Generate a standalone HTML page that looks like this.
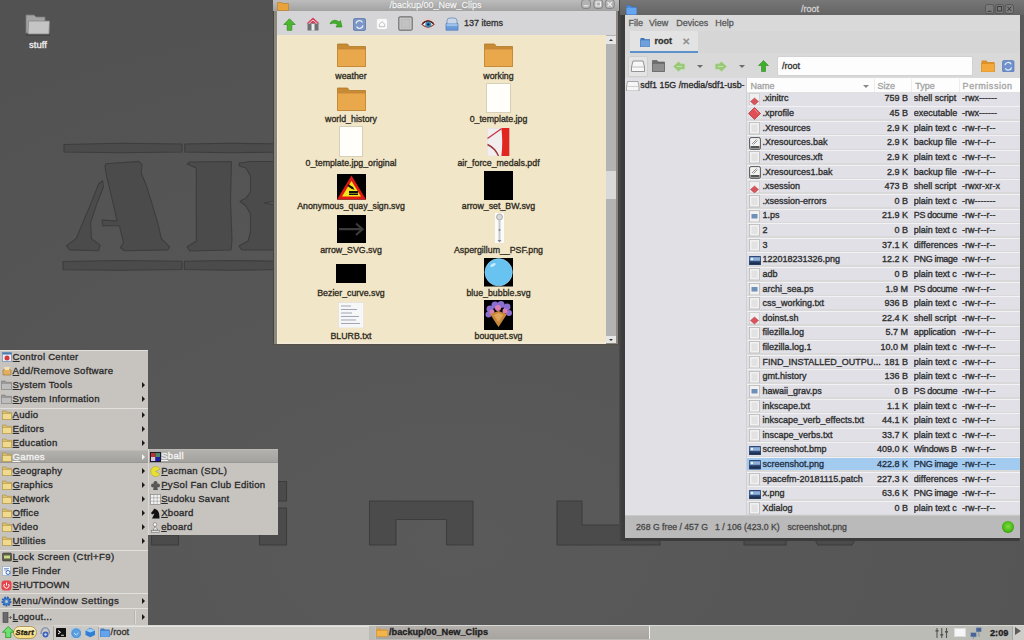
<!DOCTYPE html>
<html><head><meta charset="utf-8">
<style>
*{box-sizing:border-box;margin:0;padding:0}
html,body{width:1024px;height:640px;overflow:hidden}
body{position:relative;background:#545454;font-family:"Liberation Sans",sans-serif;color:#222;-webkit-text-stroke-width:0.32px}
.a{position:absolute}
.t{position:absolute;white-space:nowrap;line-height:1}
</style></head><body>

<!-- wallpaper shapes -->
<svg class="a" style="left:0;top:0" width="1024" height="640">
 <defs>
  <radialGradient id="wg" cx="0.45" cy="0.85" r="0.9">
   <stop offset="0" stop-color="#5a5a5a"/><stop offset="1" stop-color="#525252"/>
  </radialGradient>
 </defs>
 <rect width="1024" height="640" fill="url(#wg)"/>
 <g fill="#4b4b4b" stroke="#3d3d3d" stroke-width="1.1" stroke-linejoin="round">
  <path d="M64 144.5L120 143.2L182 144V152L120 152.8L64 152z"/>
  <path d="M184.8 144L230 143.2L285 144V152L230 152.8L184.8 152z"/>
  <path d="M63 261.5L120 260.5L182 261.3V269.5L120 270.3L63 269.7z"/>
  <path d="M184.3 261.3L230 260.5L285 261.3V269.5L230 270.3L184.3 269.5z"/>
  <polygon points="102.6,180.7 103.4,187.2 97,203.3 90.6,222.6 91.4,238.6 100.2,245.1 98.6,250.7 69.7,249.9 66.4,245.9 76.1,238.6 89,208.1 98.6,184"/>
  
  <polygon points="105.8,163.8 138.8,161.4 142,164.7 141.2,172.7 146.9,187.2 153.3,208.1 158.1,224.2 161.3,238.6 169.4,246.7 167.8,249.9 124.3,250.7 120.3,247.5 123.5,242.7 119.5,225.8 102.6,225.8 102.1,220.1 117.1,220.9 113.1,203.3 106.6,175.9 105,166.3"/>
  <polygon points="187,164 190,162 231.5,161.5 230.5,200 232,240 231,250 190,251 187,247 196.3,241 196.3,168"/>
  <polygon points="239.3,163 250,161.5 285,161.5 285,199 264,203 285,207 285,250 242,250 239,246 248,241 250.5,232 250.5,214 246,206 240,201.5 246,198 250.5,192 250.5,176 246,168 239.3,166"/>
  <polygon points="369.5,501 473,501 473,545 446.5,545 446.5,519.5 396,519.5 396,545 369.5,545"/>
  <polygon points="557,501 582,501 582,525 660,525 660,545 557,545"/>
  <rect x="151.5" y="535" width="27" height="10"/>
  <rect x="259.5" y="481.5" width="27" height="19.5"/>
  <rect x="259.5" y="508" width="27" height="37"/>
  <rect x="744" y="538" width="42" height="7"/>
  <polygon points="814,538 856,538 852,545 818,545"/>
 </g>
</svg>

<!-- desktop icon -->
<div class="a" style="left:25px;top:14px;width:25px;height:23px">
 <svg width="25" height="23" viewBox="0 0 25 23">
  <rect x="1" y="19.5" width="24" height="2.5" fill="#3e3e3e" opacity="0.7"/>
  <path d="M1 1h8l2 2h9v16H1z" fill="#a4a4a4" stroke="#7a7a7a" stroke-width="0.8"/>
  <path d="M3.5 7H24.5L24 20H3z" fill="#c4c4c4" stroke="#858585" stroke-width="0.8"/>
 </svg>
</div>
<div class="t" style="left:29px;top:40px;font-size:9.5px;color:#f0f0f0">stuff</div>

<!-- LEFT WINDOW -->
<div class="a" style="left:273px;top:0;width:346px;height:346px;background:linear-gradient(#454540 340px,#4d4944 343px,#5a5650 346px)"></div><div class="a" style="left:274.3px;top:0;width:344.2px;height:343.5px;background:#8c8880"></div>
<div class="a" style="left:273px;top:0;width:345.5px;height:11px;background:linear-gradient(#bdbdbd,#a2a2a2)"></div>
<svg class="a" style="left:277px;top:1px" width="12" height="10" viewBox="0 0 12 10"><path d="M0.5 1.5h4l1 1h6v7h-11z" fill="#e8a33c" stroke="#b97a20" stroke-width="0.6"/></svg>
<div class="t" style="left:389.5px;top:0.5px;font-size:9px;color:#f6f6f6;text-shadow:0 0 1px #555">/backup/00_New_Clips</div>
<svg class="a" style="left:580.5px;top:-1px" width="34" height="10" viewBox="0 0 34 10">
<g fill="#b2b2b2" stroke="#7a7a7a" stroke-width="0.8"><rect x="0.5" y="0.5" width="9" height="9" rx="3"/><rect x="12.8" y="0.5" width="9" height="9" rx="3"/><rect x="24.3" y="0.5" width="9" height="9" rx="3"/></g>
<g stroke="#eee" stroke-width="1.1" fill="none"><path d="M2.5 6.8H7.5"/><rect x="15" y="3" width="4.6" height="4"/><path d="M26.5 3L31 7.5M31 3L26.5 7.5"/></g></svg>
<!-- toolbar -->
<div class="a" style="left:277px;top:11px;width:339px;height:24px;background:#d5d5d8"></div>
<div class="a" style="left:277px;top:35px;width:329px;height:308.5px;background:#f1e6c7;border-left:1.5px solid #f6eedb;border-bottom:2.5px solid #f2ead6"></div>
<!-- scrollbar -->
<div class="a" style="left:606px;top:35px;width:9.5px;height:308px;background:#b3b3b3"></div>
<div class="a" style="left:606px;top:36px;width:9.5px;height:8px;background:#e6e6e6"></div>
<div class="a" style="left:608.5px;top:39px;width:0;height:0;border-left:2.5px solid transparent;border-right:2.5px solid transparent;border-bottom:2.5px solid #333"></div>
<div class="a" style="left:606px;top:170.5px;width:9.5px;height:28px;background:#d9d9d9"></div>
<div class="a" style="left:606px;top:336px;width:9.5px;height:7px;background:#e6e6e6"></div>
<div class="a" style="left:608.5px;top:338.5px;width:0;height:0;border-left:2.5px solid transparent;border-right:2.5px solid transparent;border-top:2.5px solid #333"></div>
<!-- left toolbar icons -->
<svg class="a" style="left:283px;top:17.5px" width="13" height="13" viewBox="0 0 13 13"><path d="M6.5 0.8L12.2 6.5H8.8V12.3H4.2V6.5H0.8z" fill="#4cb830" stroke="#2f8a1c" stroke-width="0.7"/></svg>
<svg class="a" style="left:306px;top:16.5px" width="14" height="14" viewBox="0 0 14 14"><path d="M7 0.5L13.5 6.5H0.5z" fill="#d2405a"/><rect x="1.5" y="6.5" width="11" height="7" fill="#6f7070"/><rect x="5.5" y="7" width="3" height="6.5" fill="#e8eef0"/><path d="M3 6.5L7 3L11 6.5" fill="none" stroke="#f2f2f2" stroke-width="0.8"/></svg>
<svg class="a" style="left:328.5px;top:17.5px" width="14" height="12" viewBox="0 0 14 12"><path d="M1 6C2 2 7 1 10 4L11.5 2.5L13 9H7L8.5 6.5C6 4.5 3.5 5 1 6z" fill="#43b02a" stroke="#2e8a1c" stroke-width="0.6"/></svg>
<svg class="a" style="left:352.5px;top:17.5px" width="13" height="13" viewBox="0 0 13 13"><rect x="0.5" y="0.5" width="12" height="12" rx="1.5" fill="#7b95c6" stroke="#55709f" stroke-width="0.7"/><path d="M3 5.5A3.5 3.5 0 0 1 9.5 4.5M10 7.5A3.5 3.5 0 0 1 3.5 8.5" fill="none" stroke="#e6edf7" stroke-width="1.3"/></svg>
<svg class="a" style="left:376px;top:17.5px" width="12.5" height="12.5" viewBox="0 0 12.5 12.5"><rect x="0.8" y="1" width="11" height="11" rx="2.2" fill="#c8c8c8"/><rect x="0.5" y="0.5" width="11" height="11" rx="2.2" fill="#fafafa" stroke="#d0d0d0" stroke-width="0.6"/><path d="M3.3 6.3L6 3.6L8.7 6.3V8.7H3.3z" fill="none" stroke="#b8b8b8" stroke-width="0.9"/></svg>
<svg class="a" style="left:397.5px;top:16px" width="15" height="15" viewBox="0 0 15 15"><rect x="0.8" y="0.8" width="13.4" height="13.4" rx="1.5" fill="#cfcfcf" stroke="#6f6f6f" stroke-width="1.2"/><rect x="3" y="3" width="9" height="9" fill="#c2c2c2" stroke="#a8a8a8" stroke-width="0.5"/></svg>
<svg class="a" style="left:421px;top:16.5px" width="14" height="14" viewBox="0 0 14 14"><ellipse cx="7" cy="7" rx="6.3" ry="5.8" fill="#e8c8c0" opacity="0.8"/><path d="M1 7.3Q7 0.5 13 7.3Q7 12.8 1 7.3z" fill="#f8f6f6" stroke="#8a3a38" stroke-width="1.1"/><path d="M1.5 6.5Q7 1.5 12.5 6.5" fill="none" stroke="#5a1a1a" stroke-width="1.4"/><circle cx="7.3" cy="7.4" r="3" fill="#3a8ab8"/><circle cx="7.3" cy="7.4" r="1.2" fill="#0a2a3a"/></svg>
<svg class="a" style="left:445px;top:16.5px" width="14" height="14" viewBox="0 0 14 14"><path d="M1 6.5H13V13.2H1z" fill="#6a9ad8" stroke="#4a78b8" stroke-width="0.7"/><path d="M2 6.5V3.5Q2 1 5 1H9Q12 1 12 3.5V6.5" fill="#c8d8ea" stroke="#6a8ab8" stroke-width="0.8"/><rect x="1.5" y="7" width="11" height="2.2" fill="#9cc0ea"/></svg>
<div class="t" style="left:464px;top:18.5px;font-size:9px;color:#333">137 items</div>
<!-- left window items -->
<style>
.lb{position:absolute;width:160px;text-align:center;font-size:8.8px;margin-top:1px;color:#2e2a22;white-space:nowrap;line-height:1}
</style>
<svg class="a" style="left:336.5px;top:43px" width="29" height="24" viewBox="0 0 29 24"><path d="M0.5 1h10l2 2.5h16v20h-28z" fill="#c98a34" stroke="#b07a2c" stroke-width="0.8"/><path d="M0.5 6h28v17.5h-28z" fill="#e9a84c" stroke="#c28637" stroke-width="0.8"/></svg>
<div class="lb" style="left:271px;top:71px">weather</div>
<svg class="a" style="left:483.5px;top:43px" width="29" height="24" viewBox="0 0 29 24"><path d="M0.5 1h10l2 2.5h16v20h-28z" fill="#c98a34" stroke="#b07a2c" stroke-width="0.8"/><path d="M0.5 6h28v17.5h-28z" fill="#e9a84c" stroke="#c28637" stroke-width="0.8"/></svg>
<div class="lb" style="left:418.5px;top:71px">working</div>

<svg class="a" style="left:336.5px;top:86.5px" width="29" height="24" viewBox="0 0 29 24"><path d="M0.5 1h10l2 2.5h16v20h-28z" fill="#c98a34" stroke="#b07a2c" stroke-width="0.8"/><path d="M0.5 6h28v17.5h-28z" fill="#e9a84c" stroke="#c28637" stroke-width="0.8"/></svg>
<div class="lb" style="left:271px;top:114.3px">world_history</div>
<div class="a" style="left:486px;top:82.5px;width:25px;height:30.5px;background:#fffefa;border:1px solid #d8cfb8"></div>
<div class="lb" style="left:418.5px;top:114.3px">0_template.jpg</div>

<div class="a" style="left:339px;top:126px;width:24px;height:30.5px;background:#fffefa;border:1px solid #d8cfb8"></div>
<div class="lb" style="left:271px;top:157.9px">0_template.jpg_original</div>
<svg class="a" style="left:487.3px;top:128.2px" width="22.3" height="28.2" viewBox="0 0 22.3 28.2"><rect x="0" y="0" width="22.3" height="28.2" fill="#f2eef0" stroke="#d8d0cc" stroke-width="0.6"/><path d="M14.4 0H22.3V28.2H14.4C15.5 18 15.5 9 14.4 0z" fill="#e0261e"/><path d="M0.5 10.5Q7 6 14.4 0.8" fill="none" stroke="#c43a44" stroke-width="1.4"/><path d="M0.5 16.5Q8 20 11.5 28" fill="none" stroke="#9c3438" stroke-width="1.4"/></svg>
<div class="lb" style="left:418.5px;top:157.9px">air_force_medals.pdf</div>

<svg class="a" style="left:336.5px;top:174.3px" width="29" height="25.6" viewBox="0 0 29 25.6"><rect width="29" height="25.6" fill="#000"/><path d="M14.5 1.5L29 25.6H0z" fill="#e01a12"/><path d="M14.5 7L24 22.5H5z" fill="#f5e51c"/><path d="M11 10L16 13L17.5 16L14 14.5L10.5 12z" fill="#111"/><rect x="12" y="17" width="9" height="2.5" fill="#111"/><rect x="12" y="20" width="9" height="1" fill="#111"/></svg>
<div class="lb" style="left:271px;top:201.4px">Anonymous_quay_sign.svg</div>
<div class="a" style="left:484px;top:171.2px;width:29px;height:29px;background:#000"></div>
<div class="lb" style="left:418.5px;top:201.4px">arrow_set_BW.svg</div>

<svg class="a" style="left:336.5px;top:214.7px" width="29" height="28.5" viewBox="0 0 29 28.5"><rect width="29" height="28.5" fill="#000"/><path d="M2 14.2H25M19 8.5L25.5 14.2L19 20" fill="none" stroke="#3b3b3b" stroke-width="2.2"/></svg>
<div class="lb" style="left:271px;top:244.6px">arrow_SVG.svg</div>
<svg class="a" style="left:494.5px;top:212.8px" width="9" height="30.5" viewBox="0 0 9 30.5"><rect width="9" height="30.5" fill="#fbfbfb"/><circle cx="4.5" cy="4" r="3" fill="#d8d8d8" stroke="#999" stroke-width="0.7"/><rect x="3.5" y="7" width="2" height="21" fill="#c9c9c9"/><circle cx="4.5" cy="17" r="1" fill="#888"/><path d="M2.5 27L4.5 29.5L6.5 27z" fill="#888"/></svg>
<div class="lb" style="left:418.5px;top:244.6px">Aspergillum__PSF.png</div>

<div class="a" style="left:336.3px;top:264px;width:29.7px;height:19px;background:#000"></div>
<div class="lb" style="left:271px;top:287.9px">Bezier_curve.svg</div>
<svg class="a" style="left:484.2px;top:258.2px" width="29.3" height="28.5" viewBox="0 0 29.3 28.5"><rect width="29.3" height="28.5" fill="#000"/><circle cx="14.65" cy="14.25" r="13.6" fill="#69c3f0"/><circle cx="14.65" cy="14.25" r="13.6" fill="none" stroke="#8fd3f5" stroke-width="0.8"/><ellipse cx="9" cy="7" rx="3" ry="1.5" fill="#c8ecfc" transform="rotate(-30 9 7)"/></svg>
<div class="lb" style="left:418.5px;top:287.9px">blue_bubble.svg</div>

<svg class="a" style="left:337.7px;top:301.8px" width="26.3" height="26.5" viewBox="0 0 26.3 26.5"><rect x="0.5" y="0.5" width="25.3" height="25.5" fill="#f7f7f7" stroke="#dcdcdc" stroke-width="0.6"/><g stroke="#8592a8" stroke-width="0.8"><path d="M3 4H13M3 7.5H19M3 11H14M3 14.5H21M3 18H18M3 21.5H22"/></g></svg>
<div class="lb" style="left:271px;top:331.4px">BLURB.txt</div>
<svg class="a" style="left:484.2px;top:299.8px" width="29.3" height="30.2" viewBox="0 0 29.3 30.2"><rect width="29.3" height="30.2" fill="#000"/><g fill="#8a6fd0"><circle cx="6" cy="9" r="3.5"/><circle cx="11" cy="5" r="3.5"/><circle cx="17" cy="4.5" r="3.5"/><circle cx="23" cy="7" r="3.5"/><circle cx="25" cy="13" r="3"/><circle cx="4.5" cy="14.5" r="3"/></g><g fill="#d77fb0"><circle cx="14" cy="8" r="3"/><circle cx="21" cy="11" r="2.5"/><circle cx="8" cy="12" r="2.5"/></g><path d="M6 14L14.5 11L23 14L14.5 27z" fill="#c8883c"/><path d="M10 15L14.5 13L19 15L14.5 22z" fill="#e0a55a"/></svg>
<div class="lb" style="left:418.5px;top:331.4px">bouquet.svg</div>
<!-- RIGHT WINDOW -->
<style>
.rw{font-size:9px;color:#2b2b2b}
.row{position:absolute;left:747px;width:273.3px;height:13.1px;background:#e0e0e6;border-top:1.5px solid #f2f2f5}
.nm{position:absolute;left:762.5px;font-size:9px;color:#2d2d2d;white-space:nowrap;line-height:1}
.sz{position:absolute;right:116px;font-size:9px;color:#2d2d2d;white-space:nowrap;line-height:1}
.ty{position:absolute;left:913.8px;width:50px;overflow:hidden;font-size:9px;color:#2d2d2d;white-space:nowrap;line-height:1}
.pm{position:absolute;left:962px;font-size:9px;color:#2d2d2d;white-space:nowrap;line-height:1}
</style>
<div class="a" style="left:618.5px;top:0;width:405.5px;height:541px;background:linear-gradient(90deg,#4a4a4a,#3c3c3c 3px,#3c3c3c 400px,#585858 401.5px,#5a5a5a)"></div>
<div class="a" style="left:619.5px;top:0;width:404.5px;height:15px;background:linear-gradient(#777,#636363)"></div>
<svg class="a" style="left:625.5px;top:4.5px" width="11" height="10" viewBox="0 0 11 10"><path d="M0.5 0.5h4l1 1.5h5v7.5h-10z" fill="#4d8fe0" stroke="#3a6fb5" stroke-width="0.5"/><rect x="0.5" y="3" width="10" height="6.5" fill="#64a6f2"/></svg>
<div class="t" style="left:801px;top:5px;font-size:9px;color:#cfcfcf">/root</div>
<svg class="a" style="left:985px;top:4.3px" width="29" height="10" viewBox="0 0 29 10">
<g fill="#7a7a7a" stroke="#505050" stroke-width="0.8"><rect x="0.5" y="0.5" width="8.3" height="9" rx="2"/><rect x="10.3" y="0.5" width="8.3" height="9" rx="2"/><rect x="20.2" y="0.5" width="8.3" height="9" rx="2"/></g>
<g stroke="#3a3a3a" stroke-width="1" fill="none"><path d="M2.5 7.3H6.5"/><rect x="12.3" y="2.5" width="4.3" height="4.5"/><path d="M22.3 2.6L26.3 7M26.3 2.6L22.3 7"/></g></svg>
<div class="a" style="left:625px;top:15px;width:395.3px;height:523px;background:#d9d9d9"></div>
<div class="t" style="left:628.5px;top:18.5px;font-size:9px;color:#5c5c5c">File</div>
<div class="t" style="left:649px;top:18.5px;font-size:9px;color:#5c5c5c">View</div>
<div class="t" style="left:676.2px;top:18.5px;font-size:9px;color:#5c5c5c">Devices</div>
<div class="t" style="left:715.3px;top:18.5px;font-size:9px;color:#5c5c5c">Help</div>
<!-- tab bar -->
<div class="a" style="left:625px;top:30.5px;width:395.3px;height:22.5px;background:#d6d6d6"></div>
<div class="a" style="left:630px;top:31.2px;width:67.5px;height:20px;background:#e3e3e3"></div>
<div class="a" style="left:630px;top:50.8px;width:67.5px;height:2.3px;background:#5b92c9"></div>
<svg class="a" style="left:639.5px;top:36.5px" width="10.5" height="10.5" viewBox="0 0 10.5 10.5"><path d="M0.5 1h3.5l1 1.2h5v7.8h-9.5z" fill="#3f76b8"/><rect x="0.5" y="3" width="9.5" height="7" fill="#6fa2dc" stroke="#4678b5" stroke-width="0.6"/></svg>
<div class="t" style="left:654.4px;top:37px;font-size:9px;font-weight:bold;color:#333">root</div>
<div class="t" style="left:681.5px;top:36.5px;font-size:10px;color:#8a8a8a">✕</div>
<!-- toolbar -->
<div class="a" style="left:628px;top:55.5px;width:19.5px;height:21px;background:#e4e4e4;border:1px solid #cfcfcf;border-radius:2px"></div>
<svg class="a" style="left:631px;top:60px" width="14" height="12" viewBox="0 0 14 12"><path d="M2 1h10l1.5 6v4.5h-13V7z" fill="#f7f7f7" stroke="#7d7d7d" stroke-width="0.8"/><path d="M0.5 7h13" stroke="#9a9a9a" stroke-width="0.6"/></svg>
<svg class="a" style="left:652px;top:60px" width="13" height="12" viewBox="0 0 13 12"><path d="M0.5 0.5h4.5l1 1.5h6.5v9.5h-12z" fill="#6e6e6e" stroke="#555" stroke-width="0.6"/><rect x="0.5" y="3.5" width="12" height="8" fill="#8e8e8e" stroke="#666" stroke-width="0.6"/></svg>
<svg class="a" style="left:673px;top:61px" width="12" height="11" viewBox="0 0 12 11"><path d="M0.5 5.5L5.5 0.8L8 3H11.5V8H8L5.5 10.2z" fill="#98c878" stroke="#a8d48a" stroke-width="0.8" stroke-linejoin="round"/><path d="M4 5.5H9" stroke="#c4e4ae" stroke-width="1"/></svg>
<div class="a" style="left:697.3px;top:65px;width:0;height:0;border-left:3px solid transparent;border-right:3px solid transparent;border-top:3px solid #6c6c6c"></div>
<svg class="a" style="left:715.3px;top:61px" width="12" height="11" viewBox="0 0 12 11"><path d="M11.5 5.5L6.5 0.8L4 3H0.5V8H4L6.5 10.2z" fill="#98c878" stroke="#a8d48a" stroke-width="0.8" stroke-linejoin="round"/><path d="M3 5.5H8" stroke="#c4e4ae" stroke-width="1"/></svg>
<div class="a" style="left:738.7px;top:65px;width:0;height:0;border-left:3px solid transparent;border-right:3px solid transparent;border-top:3px solid #6c6c6c"></div>
<svg class="a" style="left:757.5px;top:60px" width="11" height="12" viewBox="0 0 11 12"><path d="M5.5 0.5L10.5 5.5H7.5V11.5H3.5V5.5H0.5z" fill="#3fae2a" stroke="#2c8a1b" stroke-width="0.6"/></svg>
<div class="a" style="left:777px;top:56px;width:196px;height:19.5px;background:#fdfdfd;border:1px solid #d2d2d2;border-radius:2px"></div>
<div class="t" style="left:782px;top:61.5px;font-size:9px;color:#333">/root</div>
<svg class="a" style="left:981px;top:59.5px" width="14" height="12.5" viewBox="0 0 14 12.5"><path d="M0.5 0.5h5l1.2 1.5h6.8v10h-13z" fill="#d98f2a"/><rect x="0.5" y="3.5" width="13" height="8.5" fill="#f4a93c" stroke="#d58a25" stroke-width="0.6"/></svg>
<svg class="a" style="left:1002px;top:59.5px" width="12.5" height="12.5" viewBox="0 0 12.5 12.5"><rect x="0.5" y="0.5" width="11.5" height="11.5" rx="1.5" fill="#6f92cc" stroke="#4d6fa8" stroke-width="0.6"/><path d="M3 5.2A3.3 3.3 0 0 1 9.2 4.3M9.5 7.3A3.3 3.3 0 0 1 3.3 8.2" fill="none" stroke="#e8eef8" stroke-width="1.2"/></svg>
<!-- sidebar -->
<div class="a" style="left:625px;top:78px;width:120.5px;height:437px;background:#e1e0e5"></div>
<svg class="a" style="left:626.2px;top:80.5px" width="13.5" height="10.5" viewBox="0 0 13.5 10.5"><path d="M1.5 0.5h10.5l1 5v4.5h-12.5V5.5z" fill="#f6f6f6" stroke="#8a8a8a" stroke-width="0.7"/><path d="M0.5 5.5h12.5" stroke="#aaa" stroke-width="0.5"/></svg>
<div class="t" style="left:640.3px;top:81px;font-size:8.85px;color:#2a2a2a">sdf1 15G /media/sdf1-usb-</div>
<div class="a" style="left:745.5px;top:78px;width:1.5px;height:437px;background:#d0d0d5"></div>
<!-- list header -->
<div class="a" style="left:747px;top:78px;width:273.3px;height:15.2px;background:#fdfdfd;border-bottom:1px solid #e0e0e0"></div>
<div class="t" style="left:750.5px;top:81.5px;font-size:9px;color:#a4a4a4">Name</div>
<div class="a" style="left:862.5px;top:85px;width:0;height:0;border-left:3px solid transparent;border-right:3px solid transparent;border-top:3px solid #888"></div>
<div class="a" style="left:873.5px;top:79px;width:1px;height:13px;background:#ececec"></div>
<div class="t" style="left:877.6px;top:81.5px;font-size:9px;color:#a4a4a4">Size</div>
<div class="a" style="left:911px;top:79px;width:1px;height:13px;background:#ececec"></div>
<div class="t" style="left:915.3px;top:81.5px;font-size:9px;color:#a4a4a4">Type</div>
<div class="a" style="left:958.5px;top:79px;width:1px;height:13px;background:#ececec"></div>
<div class="t" style="left:962.6px;top:81.5px;font-size:9px;color:#a4a4a4;letter-spacing:0.55px">Permission</div>
<!-- status bar -->
<div class="a" style="left:625px;top:515.3px;width:395.3px;height:22.7px;background:#bababa;border-top:1px solid #c8c8c8"></div>
<div class="t" style="left:636px;top:522.5px;font-size:8.7px;color:#4a4a4a">268 G free / 457 G</div>
<div class="t" style="left:715px;top:522.5px;font-size:8.7px;color:#4a4a4a">1 / 106 (423.0 K)</div>
<div class="t" style="left:787.5px;top:522.5px;font-size:8.7px;color:#4a4a4a">screenshot.png</div>
<div class="a" style="left:1002.2px;top:521px;width:11.7px;height:11.5px;border-radius:50%;background:radial-gradient(circle at 50% 45%,#7ee040,#4cb818 55%,#2f8a12 85%,#6cbc50)"></div>
<!-- rows -->
<div class="a" style="left:747px;top:93.2px;width:273.3px;height:421.8px;overflow:hidden"><div class="a" style="left:-747px;top:-93.2px;width:1024px;height:640px">
<div class="a" style="left:747px;top:93.2px;width:273.3px;height:13.00px;background:#e0e0e6"></div>
<svg class="a" style="left:749.2px;top:92.78px" width="11" height="12.5" viewBox="0 0 11 12.5"><rect x="0.5" y="0.5" width="10" height="11.5" fill="#efefef" stroke="#c4c4c4" stroke-width="0.6"/><path d="M5.5 5L9.5 8.5L5.5 12L1.5 8.5z" fill="#d9545c" stroke="#a83a40" stroke-width="0.5"/></svg>
<div class="nm" style="top:94.48px;color:#2d2d2d">.xinitrc</div>
<div class="sz" style="top:94.48px;color:#2d2d2d">759 B</div>
<div class="ty" style="top:94.48px;color:#2d2d2d;letter-spacing:0px">shell script</div>
<div class="pm" style="top:94.48px;color:#2d2d2d">-rwx------</div>
<div class="row" style="top:106.20px;background:#e0e0e6"></div>
<svg class="a" style="left:748.2px;top:107.4px" width="13" height="13" viewBox="0 0 13 13"><path d="M6.5 0.5L12.5 6.5L6.5 12.5L0.5 6.5z" fill="#df4d55" stroke="#a8333a" stroke-width="0.7"/><path d="M6.5 2L10 6.5" stroke="#f4a0a4" stroke-width="0.8"/></svg>
<div class="nm" style="top:109.10px;color:#2d2d2d">.xprofile</div>
<div class="sz" style="top:109.10px;color:#2d2d2d">45 B</div>
<div class="ty" style="top:109.10px;color:#2d2d2d;letter-spacing:0px">executable</div>
<div class="pm" style="top:109.10px;color:#2d2d2d">-rwx------</div>
<div class="row" style="top:120.82px;background:#e0e0e6"></div>
<svg class="a" style="left:749.2px;top:122.02px" width="11" height="12.5" viewBox="0 0 11 12.5"><rect x="0.5" y="0.5" width="10" height="11.5" fill="#f1f1f1" stroke="#b9b9b9" stroke-width="0.8"/><rect x="2.5" y="2.5" width="6" height="7.5" fill="#e2e2e2"/></svg>
<div class="nm" style="top:123.72px;color:#2d2d2d">.Xresources</div>
<div class="sz" style="top:123.72px;color:#2d2d2d">2.9 K</div>
<div class="ty" style="top:123.72px;color:#2d2d2d;letter-spacing:0px">plain text c</div>
<div class="pm" style="top:123.72px;color:#2d2d2d">-rw-r--r--</div>
<div class="row" style="top:135.44px;background:#e0e0e6"></div>
<svg class="a" style="left:748.7px;top:136.64px" width="12" height="13" viewBox="0 0 12 13"><rect x="0.6" y="0.6" width="10.8" height="11.8" rx="1.5" fill="#f2f2f2" stroke="#555" stroke-width="1"/><path d="M3 7L7.5 2.5M4.5 7.5L8.5 3.5" stroke="#666" stroke-width="0.7"/><rect x="1.5" y="9" width="9" height="2.5" fill="#555"/></svg>
<div class="nm" style="top:138.34px;color:#2d2d2d">.Xresources.bak</div>
<div class="sz" style="top:138.34px;color:#2d2d2d">2.9 K</div>
<div class="ty" style="top:138.34px;color:#2d2d2d;letter-spacing:0px">backup file</div>
<div class="pm" style="top:138.34px;color:#2d2d2d">-rw-r--r--</div>
<div class="row" style="top:150.06px;background:#e0e0e6"></div>
<svg class="a" style="left:749.2px;top:151.26px" width="11" height="12.5" viewBox="0 0 11 12.5"><rect x="0.5" y="0.5" width="10" height="11.5" fill="#f1f1f1" stroke="#b9b9b9" stroke-width="0.8"/><rect x="2.5" y="2.5" width="6" height="7.5" fill="#e2e2e2"/></svg>
<div class="nm" style="top:152.96px;color:#2d2d2d">.Xresources.xft</div>
<div class="sz" style="top:152.96px;color:#2d2d2d">2.9 K</div>
<div class="ty" style="top:152.96px;color:#2d2d2d;letter-spacing:0px">plain text c</div>
<div class="pm" style="top:152.96px;color:#2d2d2d">-rw-r--r--</div>
<div class="row" style="top:164.68px;background:#e0e0e6"></div>
<svg class="a" style="left:748.7px;top:165.88px" width="12" height="13" viewBox="0 0 12 13"><rect x="0.6" y="0.6" width="10.8" height="11.8" rx="1.5" fill="#f2f2f2" stroke="#555" stroke-width="1"/><path d="M3 7L7.5 2.5M4.5 7.5L8.5 3.5" stroke="#666" stroke-width="0.7"/><rect x="1.5" y="9" width="9" height="2.5" fill="#555"/></svg>
<div class="nm" style="top:167.58px;color:#2d2d2d">.Xresources1.bak</div>
<div class="sz" style="top:167.58px;color:#2d2d2d">2.9 K</div>
<div class="ty" style="top:167.58px;color:#2d2d2d;letter-spacing:0px">backup file</div>
<div class="pm" style="top:167.58px;color:#2d2d2d">-rw-r--r--</div>
<div class="row" style="top:179.30px;background:#e0e0e6"></div>
<svg class="a" style="left:749.2px;top:180.5px" width="11" height="12.5" viewBox="0 0 11 12.5"><rect x="0.5" y="0.5" width="10" height="11.5" fill="#efefef" stroke="#c4c4c4" stroke-width="0.6"/><path d="M5.5 5L9.5 8.5L5.5 12L1.5 8.5z" fill="#d9545c" stroke="#a83a40" stroke-width="0.5"/></svg>
<div class="nm" style="top:182.20px;color:#2d2d2d">.xsession</div>
<div class="sz" style="top:182.20px;color:#2d2d2d">473 B</div>
<div class="ty" style="top:182.20px;color:#2d2d2d;letter-spacing:0px">shell script</div>
<div class="pm" style="top:182.20px;color:#2d2d2d">-rwxr-xr-x</div>
<div class="row" style="top:193.92px;background:#e0e0e6"></div>
<svg class="a" style="left:749.2px;top:195.12px" width="11" height="12.5" viewBox="0 0 11 12.5"><rect x="0.5" y="0.5" width="10" height="11.5" fill="#f1f1f1" stroke="#b9b9b9" stroke-width="0.8"/><rect x="2.5" y="2.5" width="6" height="7.5" fill="#e2e2e2"/></svg>
<div class="nm" style="top:196.82px;color:#2d2d2d">.xsession-errors</div>
<div class="sz" style="top:196.82px;color:#2d2d2d">0 B</div>
<div class="ty" style="top:196.82px;color:#2d2d2d;letter-spacing:0px">plain text c</div>
<div class="pm" style="top:196.82px;color:#2d2d2d">-rw-------</div>
<div class="row" style="top:208.54px;background:#e0e0e6"></div>
<svg class="a" style="left:749.2px;top:209.74px" width="11" height="12.5" viewBox="0 0 11 12.5"><rect x="0.5" y="0.5" width="10" height="11.5" fill="#f1f1f1" stroke="#b9b9b9" stroke-width="0.8"/><rect x="2.5" y="4" width="6" height="4.5" fill="#6d8fb8"/></svg>
<div class="nm" style="top:211.44px;color:#2d2d2d">1.ps</div>
<div class="sz" style="top:211.44px;color:#2d2d2d">21.9 K</div>
<div class="ty" style="top:211.44px;color:#2d2d2d;letter-spacing:-0.35px">PS docume</div>
<div class="pm" style="top:211.44px;color:#2d2d2d">-rw-r--r--</div>
<div class="row" style="top:223.16px;background:#e0e0e6"></div>
<svg class="a" style="left:749.2px;top:224.36px" width="11" height="12.5" viewBox="0 0 11 12.5"><rect x="0.5" y="0.5" width="10" height="11.5" fill="#f1f1f1" stroke="#b9b9b9" stroke-width="0.8"/><rect x="2.5" y="2.5" width="6" height="7.5" fill="#e2e2e2"/></svg>
<div class="nm" style="top:226.06px;color:#2d2d2d">2</div>
<div class="sz" style="top:226.06px;color:#2d2d2d">0 B</div>
<div class="ty" style="top:226.06px;color:#2d2d2d;letter-spacing:0px">plain text c</div>
<div class="pm" style="top:226.06px;color:#2d2d2d">-rw-r--r--</div>
<div class="row" style="top:237.78px;background:#e0e0e6"></div>
<svg class="a" style="left:749.2px;top:238.98px" width="11" height="12.5" viewBox="0 0 11 12.5"><rect x="0.5" y="0.5" width="10" height="11.5" fill="#f1f1f1" stroke="#b9b9b9" stroke-width="0.8"/><rect x="2.5" y="2.5" width="6" height="7.5" fill="#e2e2e2"/></svg>
<div class="nm" style="top:240.68px;color:#2d2d2d">3</div>
<div class="sz" style="top:240.68px;color:#2d2d2d">37.1 K</div>
<div class="ty" style="top:240.68px;color:#2d2d2d;letter-spacing:0px">differences</div>
<div class="pm" style="top:240.68px;color:#2d2d2d">-rw-r--r--</div>
<div class="row" style="top:252.40px;background:#e0e0e6"></div>
<svg class="a" style="left:748.7px;top:255.6px" width="12" height="9.5" viewBox="0 0 12 9.5"><rect x="0" y="0" width="12" height="9.5" rx="0.8" fill="#2f4a78"/><rect x="0.8" y="1.2" width="10.4" height="3.6" fill="#8eb0d8"/><circle cx="3" cy="3" r="1.2" fill="#e8f3fb"/><rect x="0.8" y="6.5" width="10.4" height="2" fill="#1d2e4e"/></svg>
<div class="nm" style="top:255.30px;color:#2d2d2d">122018231326.png</div>
<div class="sz" style="top:255.30px;color:#2d2d2d">12.2 K</div>
<div class="ty" style="top:255.30px;color:#2d2d2d;letter-spacing:-0.33px">PNG image</div>
<div class="pm" style="top:255.30px;color:#2d2d2d">-rw-r--r--</div>
<div class="row" style="top:267.02px;background:#e0e0e6"></div>
<svg class="a" style="left:749.2px;top:268.22px" width="11" height="12.5" viewBox="0 0 11 12.5"><rect x="0.5" y="0.5" width="10" height="11.5" fill="#f1f1f1" stroke="#b9b9b9" stroke-width="0.8"/><rect x="2.5" y="2.5" width="6" height="7.5" fill="#e2e2e2"/></svg>
<div class="nm" style="top:269.92px;color:#2d2d2d">adb</div>
<div class="sz" style="top:269.92px;color:#2d2d2d">0 B</div>
<div class="ty" style="top:269.92px;color:#2d2d2d;letter-spacing:0px">plain text c</div>
<div class="pm" style="top:269.92px;color:#2d2d2d">-rw-r--r--</div>
<div class="row" style="top:281.64px;background:#e0e0e6"></div>
<svg class="a" style="left:749.2px;top:282.84px" width="11" height="12.5" viewBox="0 0 11 12.5"><rect x="0.5" y="0.5" width="10" height="11.5" fill="#f1f1f1" stroke="#b9b9b9" stroke-width="0.8"/><rect x="2.5" y="4" width="6" height="4.5" fill="#6d8fb8"/></svg>
<div class="nm" style="top:284.54px;color:#2d2d2d">archi_sea.ps</div>
<div class="sz" style="top:284.54px;color:#2d2d2d">1.9 M</div>
<div class="ty" style="top:284.54px;color:#2d2d2d;letter-spacing:-0.35px">PS docume</div>
<div class="pm" style="top:284.54px;color:#2d2d2d">-rw-r--r--</div>
<div class="row" style="top:296.26px;background:#e0e0e6"></div>
<svg class="a" style="left:749.2px;top:297.46px" width="11" height="12.5" viewBox="0 0 11 12.5"><rect x="0.5" y="0.5" width="10" height="11.5" fill="#f1f1f1" stroke="#b9b9b9" stroke-width="0.8"/><rect x="2.5" y="2.5" width="6" height="7.5" fill="#e2e2e2"/></svg>
<div class="nm" style="top:299.16px;color:#2d2d2d">css_working.txt</div>
<div class="sz" style="top:299.16px;color:#2d2d2d">936 B</div>
<div class="ty" style="top:299.16px;color:#2d2d2d;letter-spacing:0px">plain text c</div>
<div class="pm" style="top:299.16px;color:#2d2d2d">-rw-r--r--</div>
<div class="row" style="top:310.88px;background:#e0e0e6"></div>
<svg class="a" style="left:749.2px;top:312.08px" width="11" height="12.5" viewBox="0 0 11 12.5"><rect x="0.5" y="0.5" width="10" height="11.5" fill="#efefef" stroke="#c4c4c4" stroke-width="0.6"/><path d="M5.5 5L9.5 8.5L5.5 12L1.5 8.5z" fill="#d9545c" stroke="#a83a40" stroke-width="0.5"/></svg>
<div class="nm" style="top:313.78px;color:#2d2d2d">doinst.sh</div>
<div class="sz" style="top:313.78px;color:#2d2d2d">22.4 K</div>
<div class="ty" style="top:313.78px;color:#2d2d2d;letter-spacing:0px">shell script</div>
<div class="pm" style="top:313.78px;color:#2d2d2d">-rw-r--r--</div>
<div class="row" style="top:325.50px;background:#e0e0e6"></div>
<svg class="a" style="left:749.2px;top:326.7px" width="11" height="12.5" viewBox="0 0 11 12.5"><rect x="0.5" y="0.5" width="10" height="11.5" fill="#f1f1f1" stroke="#b9b9b9" stroke-width="0.8"/><rect x="2.5" y="2.5" width="6" height="7.5" fill="#e2e2e2"/></svg>
<div class="nm" style="top:328.40px;color:#2d2d2d">filezilla.log</div>
<div class="sz" style="top:328.40px;color:#2d2d2d">5.7 M</div>
<div class="ty" style="top:328.40px;color:#2d2d2d;letter-spacing:-0.1px">application</div>
<div class="pm" style="top:328.40px;color:#2d2d2d">-rw-r--r--</div>
<div class="row" style="top:340.12px;background:#e0e0e6"></div>
<svg class="a" style="left:749.2px;top:341.32px" width="11" height="12.5" viewBox="0 0 11 12.5"><rect x="0.5" y="0.5" width="10" height="11.5" fill="#f1f1f1" stroke="#b9b9b9" stroke-width="0.8"/><rect x="2.5" y="2.5" width="6" height="7.5" fill="#e2e2e2"/></svg>
<div class="nm" style="top:343.02px;color:#2d2d2d">filezilla.log.1</div>
<div class="sz" style="top:343.02px;color:#2d2d2d">10.0 M</div>
<div class="ty" style="top:343.02px;color:#2d2d2d;letter-spacing:0px">plain text c</div>
<div class="pm" style="top:343.02px;color:#2d2d2d">-rw-r--r--</div>
<div class="row" style="top:354.74px;background:#e0e0e6"></div>
<svg class="a" style="left:749.2px;top:355.94px" width="11" height="12.5" viewBox="0 0 11 12.5"><rect x="0.5" y="0.5" width="10" height="11.5" fill="#f1f1f1" stroke="#b9b9b9" stroke-width="0.8"/><rect x="2.5" y="2.5" width="6" height="7.5" fill="#e2e2e2"/></svg>
<div class="nm" style="top:357.64px;color:#2d2d2d">FIND_INSTALLED_OUTPU...</div>
<div class="sz" style="top:357.64px;color:#2d2d2d">181 B</div>
<div class="ty" style="top:357.64px;color:#2d2d2d;letter-spacing:0px">plain text c</div>
<div class="pm" style="top:357.64px;color:#2d2d2d">-rw-r--r--</div>
<div class="row" style="top:369.36px;background:#e0e0e6"></div>
<svg class="a" style="left:749.2px;top:370.56px" width="11" height="12.5" viewBox="0 0 11 12.5"><rect x="0.5" y="0.5" width="10" height="11.5" fill="#f1f1f1" stroke="#b9b9b9" stroke-width="0.8"/><rect x="2.5" y="2.5" width="6" height="7.5" fill="#e2e2e2"/></svg>
<div class="nm" style="top:372.26px;color:#2d2d2d">gmt.history</div>
<div class="sz" style="top:372.26px;color:#2d2d2d">136 B</div>
<div class="ty" style="top:372.26px;color:#2d2d2d;letter-spacing:0px">plain text c</div>
<div class="pm" style="top:372.26px;color:#2d2d2d">-rw-r--r--</div>
<div class="row" style="top:383.98px;background:#e0e0e6"></div>
<svg class="a" style="left:749.2px;top:385.18px" width="11" height="12.5" viewBox="0 0 11 12.5"><rect x="0.5" y="0.5" width="10" height="11.5" fill="#f1f1f1" stroke="#b9b9b9" stroke-width="0.8"/><rect x="2.5" y="4" width="6" height="4.5" fill="#6d8fb8"/></svg>
<div class="nm" style="top:386.88px;color:#2d2d2d">hawaii_grav.ps</div>
<div class="sz" style="top:386.88px;color:#2d2d2d">0 B</div>
<div class="ty" style="top:386.88px;color:#2d2d2d;letter-spacing:-0.35px">PS docume</div>
<div class="pm" style="top:386.88px;color:#2d2d2d">-rw-r--r--</div>
<div class="row" style="top:398.60px;background:#e0e0e6"></div>
<svg class="a" style="left:749.2px;top:399.8px" width="11" height="12.5" viewBox="0 0 11 12.5"><rect x="0.5" y="0.5" width="10" height="11.5" fill="#f1f1f1" stroke="#b9b9b9" stroke-width="0.8"/><rect x="2.5" y="2.5" width="6" height="7.5" fill="#e2e2e2"/></svg>
<div class="nm" style="top:401.50px;color:#2d2d2d">inkscape.txt</div>
<div class="sz" style="top:401.50px;color:#2d2d2d">1.1 K</div>
<div class="ty" style="top:401.50px;color:#2d2d2d;letter-spacing:0px">plain text c</div>
<div class="pm" style="top:401.50px;color:#2d2d2d">-rw-r--r--</div>
<div class="row" style="top:413.22px;background:#e0e0e6"></div>
<svg class="a" style="left:749.2px;top:414.42px" width="11" height="12.5" viewBox="0 0 11 12.5"><rect x="0.5" y="0.5" width="10" height="11.5" fill="#f1f1f1" stroke="#b9b9b9" stroke-width="0.8"/><rect x="2.5" y="2.5" width="6" height="7.5" fill="#e2e2e2"/></svg>
<div class="nm" style="top:416.12px;color:#2d2d2d">inkscape_verb_effects.txt</div>
<div class="sz" style="top:416.12px;color:#2d2d2d">44.1 K</div>
<div class="ty" style="top:416.12px;color:#2d2d2d;letter-spacing:0px">plain text c</div>
<div class="pm" style="top:416.12px;color:#2d2d2d">-rw-r--r--</div>
<div class="row" style="top:427.84px;background:#e0e0e6"></div>
<svg class="a" style="left:749.2px;top:429.04px" width="11" height="12.5" viewBox="0 0 11 12.5"><rect x="0.5" y="0.5" width="10" height="11.5" fill="#f1f1f1" stroke="#b9b9b9" stroke-width="0.8"/><rect x="2.5" y="2.5" width="6" height="7.5" fill="#e2e2e2"/></svg>
<div class="nm" style="top:430.74px;color:#2d2d2d">inscape_verbs.txt</div>
<div class="sz" style="top:430.74px;color:#2d2d2d">33.7 K</div>
<div class="ty" style="top:430.74px;color:#2d2d2d;letter-spacing:0px">plain text c</div>
<div class="pm" style="top:430.74px;color:#2d2d2d">-rw-r--r--</div>
<div class="row" style="top:442.46px;background:#e0e0e6"></div>
<svg class="a" style="left:748.7px;top:445.66px" width="12" height="9.5" viewBox="0 0 12 9.5"><rect x="0" y="0" width="12" height="9.5" rx="0.8" fill="#2f4a78"/><rect x="0.8" y="1.2" width="10.4" height="3.6" fill="#8eb0d8"/><circle cx="3" cy="3" r="1.2" fill="#e8f3fb"/><rect x="0.8" y="6.5" width="10.4" height="2" fill="#1d2e4e"/></svg>
<div class="nm" style="top:445.36px;color:#2d2d2d">screenshot.bmp</div>
<div class="sz" style="top:445.36px;color:#2d2d2d">409.0 K</div>
<div class="ty" style="top:445.36px;color:#2d2d2d;letter-spacing:-0.22px">Windows B</div>
<div class="pm" style="top:445.36px;color:#2d2d2d">-rw-r--r--</div>
<div class="row" style="top:457.08px;background:#a3cbf0"></div>
<svg class="a" style="left:748.7px;top:460.28px" width="12" height="9.5" viewBox="0 0 12 9.5"><rect x="0" y="0" width="12" height="9.5" rx="0.8" fill="#2f4a78"/><rect x="0.8" y="1.2" width="10.4" height="3.6" fill="#8eb0d8"/><circle cx="3" cy="3" r="1.2" fill="#e8f3fb"/><rect x="0.8" y="6.5" width="10.4" height="2" fill="#1d2e4e"/></svg>
<div class="nm" style="top:459.98px;color:#1f2f45">screenshot.png</div>
<div class="sz" style="top:459.98px;color:#1f2f45">422.8 K</div>
<div class="ty" style="top:459.98px;color:#1f2f45;letter-spacing:-0.33px">PNG image</div>
<div class="pm" style="top:459.98px;color:#1f2f45">-rw-r--r--</div>
<div class="row" style="top:471.70px;background:#e0e0e6"></div>
<svg class="a" style="left:749.2px;top:472.9px" width="11" height="12.5" viewBox="0 0 11 12.5"><rect x="0.5" y="0.5" width="10" height="11.5" fill="#f1f1f1" stroke="#b9b9b9" stroke-width="0.8"/><rect x="2.5" y="2.5" width="6" height="7.5" fill="#e2e2e2"/></svg>
<div class="nm" style="top:474.60px;color:#2d2d2d">spacefm-20181115.patch</div>
<div class="sz" style="top:474.60px;color:#2d2d2d">227.3 K</div>
<div class="ty" style="top:474.60px;color:#2d2d2d;letter-spacing:0px">differences</div>
<div class="pm" style="top:474.60px;color:#2d2d2d">-rw-r--r--</div>
<div class="row" style="top:486.32px;background:#e0e0e6"></div>
<svg class="a" style="left:748.7px;top:489.52px" width="12" height="9.5" viewBox="0 0 12 9.5"><rect x="0" y="0" width="12" height="9.5" rx="0.8" fill="#2f4a78"/><rect x="0.8" y="1.2" width="10.4" height="3.6" fill="#8eb0d8"/><circle cx="3" cy="3" r="1.2" fill="#e8f3fb"/><rect x="0.8" y="6.5" width="10.4" height="2" fill="#1d2e4e"/></svg>
<div class="nm" style="top:489.22px;color:#2d2d2d">x.png</div>
<div class="sz" style="top:489.22px;color:#2d2d2d">63.6 K</div>
<div class="ty" style="top:489.22px;color:#2d2d2d;letter-spacing:-0.33px">PNG image</div>
<div class="pm" style="top:489.22px;color:#2d2d2d">-rw-r--r--</div>
<div class="row" style="top:500.94px;background:#e0e0e6"></div>
<svg class="a" style="left:749.2px;top:502.14px" width="11" height="12.5" viewBox="0 0 11 12.5"><rect x="0.5" y="0.5" width="10" height="11.5" fill="#f1f1f1" stroke="#b9b9b9" stroke-width="0.8"/><rect x="2.5" y="2.5" width="6" height="7.5" fill="#e2e2e2"/></svg>
<div class="nm" style="top:503.84px;color:#2d2d2d">Xdialog</div>
<div class="sz" style="top:503.84px;color:#2d2d2d">0 B</div>
<div class="ty" style="top:503.84px;color:#2d2d2d;letter-spacing:0px">plain text c</div>
<div class="pm" style="top:503.84px;color:#2d2d2d">-rw-r--r--</div>
</div></div>
<!-- MENU -->
<div class="a" style="left:0;top:349.5px;width:148px;height:275px;background:#c7c4c0;border-top:1px solid #e2e0dc"></div>
<svg class="a" style="left:1.5px;top:352.20px" width="10" height="10" viewBox="0 0 10 10"><rect x="0.5" y="0.5" width="9" height="9" fill="#e8eef5" stroke="#6a8fb8" stroke-width="0.7"/><rect x="0.5" y="0.5" width="9" height="2" fill="#4a7ab0"/><circle cx="5" cy="6" r="2.5" fill="#d9363e"/></svg>
<div class="t" style="left:12.6px;top:352.10px;font-size:9.6px;letter-spacing:0.25px;color:#2b2b2b"><u style="text-decoration-thickness:1px;text-underline-offset:1px">C</u>ontrol Center</div>
<svg class="a" style="left:1.5px;top:366.20px" width="10" height="10" viewBox="0 0 10 10"><path d="M1 4L5 2L9 4V9H1z" fill="#e0b060" stroke="#a07030" stroke-width="0.6"/><path d="M2 1L8 1L7 4H3z" fill="#f4e0b0"/></svg>
<div class="t" style="left:12.6px;top:366.10px;font-size:9.6px;letter-spacing:0.25px;color:#2b2b2b"><u style="text-decoration-thickness:1px;text-underline-offset:1px">A</u>dd/Remove Software</div>
<svg class="a" style="left:1px;top:380.20px" width="11" height="10" viewBox="0 0 11 10"><path d="M0.5 1h3.5l1 1.3h5.5v7.2h-10z" fill="#9a9a9a" stroke="#7a7a7a" stroke-width="0.6"/><rect x="0.5" y="3.3" width="10" height="6.2" fill="#bdbdbd" stroke="#8a8a8a" stroke-width="0.6"/></svg>
<div class="t" style="left:12.6px;top:380.10px;font-size:9.6px;letter-spacing:0.25px;color:#2b2b2b"><u style="text-decoration-thickness:1px;text-underline-offset:1px">S</u>ystem Tools</div>
<div class="a" style="left:142px;top:382.20px;width:0;height:0;border-top:3px solid transparent;border-bottom:3px solid transparent;border-left:3.8px solid #1a1a1a"></div>
<svg class="a" style="left:1px;top:394.30px" width="11" height="10" viewBox="0 0 11 10"><path d="M0.5 1h3.5l1 1.3h5.5v7.2h-10z" fill="#9a9a9a" stroke="#7a7a7a" stroke-width="0.6"/><rect x="0.5" y="3.3" width="10" height="6.2" fill="#bdbdbd" stroke="#8a8a8a" stroke-width="0.6"/></svg>
<div class="t" style="left:12.6px;top:394.20px;font-size:9.6px;letter-spacing:0.25px;color:#2b2b2b"><u style="text-decoration-thickness:1px;text-underline-offset:1px">S</u>ystem Information</div>
<div class="a" style="left:142px;top:396.30px;width:0;height:0;border-top:3px solid transparent;border-bottom:3px solid transparent;border-left:3.8px solid #1a1a1a"></div>
<div class="a" style="left:0;top:407.90px;width:148px;height:1px;background:#e2e0dc"></div>
<svg class="a" style="left:1.5px;top:409.70px" width="10" height="10" viewBox="0 0 10 10"><path d="M0.5 1h3.5l1 1.3h4.5v7.2h-9z" fill="#d9bf6a" stroke="#a88d45" stroke-width="0.6"/><rect x="0.5" y="3.3" width="9" height="6.2" fill="#f0da8e" stroke="#b09550" stroke-width="0.6"/></svg>
<div class="t" style="left:12.6px;top:409.60px;font-size:9.6px;letter-spacing:0.25px;color:#2b2b2b"><u style="text-decoration-thickness:1px;text-underline-offset:1px">A</u>udio</div>
<div class="a" style="left:142px;top:411.70px;width:0;height:0;border-top:3px solid transparent;border-bottom:3px solid transparent;border-left:3.8px solid #1a1a1a"></div>
<svg class="a" style="left:1.5px;top:423.80px" width="10" height="10" viewBox="0 0 10 10"><path d="M0.5 1h3.5l1 1.3h4.5v7.2h-9z" fill="#d9bf6a" stroke="#a88d45" stroke-width="0.6"/><rect x="0.5" y="3.3" width="9" height="6.2" fill="#f0da8e" stroke="#b09550" stroke-width="0.6"/></svg>
<div class="t" style="left:12.6px;top:423.70px;font-size:9.6px;letter-spacing:0.25px;color:#2b2b2b"><u style="text-decoration-thickness:1px;text-underline-offset:1px">E</u>ditors</div>
<div class="a" style="left:142px;top:425.80px;width:0;height:0;border-top:3px solid transparent;border-bottom:3px solid transparent;border-left:3.8px solid #1a1a1a"></div>
<svg class="a" style="left:1.5px;top:437.90px" width="10" height="10" viewBox="0 0 10 10"><path d="M0.5 1h3.5l1 1.3h4.5v7.2h-9z" fill="#d9bf6a" stroke="#a88d45" stroke-width="0.6"/><rect x="0.5" y="3.3" width="9" height="6.2" fill="#f0da8e" stroke="#b09550" stroke-width="0.6"/></svg>
<div class="t" style="left:12.6px;top:437.80px;font-size:9.6px;letter-spacing:0.25px;color:#2b2b2b"><u style="text-decoration-thickness:1px;text-underline-offset:1px">E</u>ducation</div>
<div class="a" style="left:142px;top:439.90px;width:0;height:0;border-top:3px solid transparent;border-bottom:3px solid transparent;border-left:3.8px solid #1a1a1a"></div>
<div class="a" style="left:0;top:450px;width:148px;height:12.5px;background:linear-gradient(#b3b1ad,#a4a29e);border-top:1px solid #bdbab6;border-bottom:1px solid #9a9894"></div>
<svg class="a" style="left:1.5px;top:451.90px" width="10" height="10" viewBox="0 0 10 10"><path d="M0.5 1h3.5l1 1.3h4.5v7.2h-9z" fill="#d9bf6a" stroke="#a88d45" stroke-width="0.6"/><rect x="0.5" y="3.3" width="9" height="6.2" fill="#f0da8e" stroke="#b09550" stroke-width="0.6"/></svg>
<div class="t" style="left:12.6px;top:451.80px;font-size:9.6px;letter-spacing:0.25px;color:#f4f4f4"><u style="text-decoration-thickness:1px;text-underline-offset:1px">G</u>ames</div>
<div class="a" style="left:142px;top:453.90px;width:0;height:0;border-top:3px solid transparent;border-bottom:3px solid transparent;border-left:3.8px solid #f4f4f4"></div>
<svg class="a" style="left:1.5px;top:466.00px" width="10" height="10" viewBox="0 0 10 10"><path d="M0.5 1h3.5l1 1.3h4.5v7.2h-9z" fill="#d9bf6a" stroke="#a88d45" stroke-width="0.6"/><rect x="0.5" y="3.3" width="9" height="6.2" fill="#f0da8e" stroke="#b09550" stroke-width="0.6"/></svg>
<div class="t" style="left:12.6px;top:465.90px;font-size:9.6px;letter-spacing:0.25px;color:#2b2b2b"><u style="text-decoration-thickness:1px;text-underline-offset:1px">G</u>eography</div>
<div class="a" style="left:142px;top:468.00px;width:0;height:0;border-top:3px solid transparent;border-bottom:3px solid transparent;border-left:3.8px solid #1a1a1a"></div>
<svg class="a" style="left:1.5px;top:480.10px" width="10" height="10" viewBox="0 0 10 10"><path d="M0.5 1h3.5l1 1.3h4.5v7.2h-9z" fill="#d9bf6a" stroke="#a88d45" stroke-width="0.6"/><rect x="0.5" y="3.3" width="9" height="6.2" fill="#f0da8e" stroke="#b09550" stroke-width="0.6"/></svg>
<div class="t" style="left:12.6px;top:480.00px;font-size:9.6px;letter-spacing:0.25px;color:#2b2b2b"><u style="text-decoration-thickness:1px;text-underline-offset:1px">G</u>raphics</div>
<div class="a" style="left:142px;top:482.10px;width:0;height:0;border-top:3px solid transparent;border-bottom:3px solid transparent;border-left:3.8px solid #1a1a1a"></div>
<svg class="a" style="left:1.5px;top:494.10px" width="10" height="10" viewBox="0 0 10 10"><path d="M0.5 1h3.5l1 1.3h4.5v7.2h-9z" fill="#d9bf6a" stroke="#a88d45" stroke-width="0.6"/><rect x="0.5" y="3.3" width="9" height="6.2" fill="#f0da8e" stroke="#b09550" stroke-width="0.6"/></svg>
<div class="t" style="left:12.6px;top:494.00px;font-size:9.6px;letter-spacing:0.25px;color:#2b2b2b"><u style="text-decoration-thickness:1px;text-underline-offset:1px">N</u>etwork</div>
<div class="a" style="left:142px;top:496.10px;width:0;height:0;border-top:3px solid transparent;border-bottom:3px solid transparent;border-left:3.8px solid #1a1a1a"></div>
<svg class="a" style="left:1.5px;top:508.10px" width="10" height="10" viewBox="0 0 10 10"><path d="M0.5 1h3.5l1 1.3h4.5v7.2h-9z" fill="#d9bf6a" stroke="#a88d45" stroke-width="0.6"/><rect x="0.5" y="3.3" width="9" height="6.2" fill="#f0da8e" stroke="#b09550" stroke-width="0.6"/></svg>
<div class="t" style="left:12.6px;top:508.00px;font-size:9.6px;letter-spacing:0.25px;color:#2b2b2b"><u style="text-decoration-thickness:1px;text-underline-offset:1px">O</u>ffice</div>
<div class="a" style="left:142px;top:510.10px;width:0;height:0;border-top:3px solid transparent;border-bottom:3px solid transparent;border-left:3.8px solid #1a1a1a"></div>
<svg class="a" style="left:1.5px;top:522.20px" width="10" height="10" viewBox="0 0 10 10"><path d="M0.5 1h3.5l1 1.3h4.5v7.2h-9z" fill="#d9bf6a" stroke="#a88d45" stroke-width="0.6"/><rect x="0.5" y="3.3" width="9" height="6.2" fill="#f0da8e" stroke="#b09550" stroke-width="0.6"/></svg>
<div class="t" style="left:12.6px;top:522.10px;font-size:9.6px;letter-spacing:0.25px;color:#2b2b2b"><u style="text-decoration-thickness:1px;text-underline-offset:1px">V</u>ideo</div>
<div class="a" style="left:142px;top:524.20px;width:0;height:0;border-top:3px solid transparent;border-bottom:3px solid transparent;border-left:3.8px solid #1a1a1a"></div>
<svg class="a" style="left:1.5px;top:536.00px" width="10" height="10" viewBox="0 0 10 10"><path d="M0.5 1h3.5l1 1.3h4.5v7.2h-9z" fill="#d9bf6a" stroke="#a88d45" stroke-width="0.6"/><rect x="0.5" y="3.3" width="9" height="6.2" fill="#f0da8e" stroke="#b09550" stroke-width="0.6"/></svg>
<div class="t" style="left:12.6px;top:535.90px;font-size:9.6px;letter-spacing:0.25px;color:#2b2b2b"><u style="text-decoration-thickness:1px;text-underline-offset:1px">U</u>tilities</div>
<div class="a" style="left:142px;top:538.00px;width:0;height:0;border-top:3px solid transparent;border-bottom:3px solid transparent;border-left:3.8px solid #1a1a1a"></div>
<div class="a" style="left:0;top:549.70px;width:148px;height:1px;background:#e2e0dc"></div>
<svg class="a" style="left:1.5px;top:551.90px" width="10" height="10" viewBox="0 0 10 10"><rect x="0.5" y="1" width="9" height="8" rx="1" fill="#5d5d4a" stroke="#3a3a30" stroke-width="0.6"/><rect x="2" y="3.5" width="6" height="3" fill="#c8d880"/></svg>
<div class="t" style="left:12.6px;top:551.80px;font-size:9.6px;letter-spacing:0.37px;color:#2b2b2b"><u style="text-decoration-thickness:1px;text-underline-offset:1px">L</u>ock Screen (Ctrl+F9)</div>
<svg class="a" style="left:1.5px;top:566.00px" width="10" height="10" viewBox="0 0 10 10"><rect x="0.5" y="0.5" width="8" height="9" fill="#f4f6fa" stroke="#8aa4c8" stroke-width="0.6"/><path d="M2 2.5H7M2 4H6" stroke="#5a80b8" stroke-width="0.7"/><circle cx="6" cy="6.5" r="2" fill="none" stroke="#4070b0" stroke-width="1"/></svg>
<div class="t" style="left:12.6px;top:565.90px;font-size:9.6px;letter-spacing:0.25px;color:#2b2b2b"><u style="text-decoration-thickness:1px;text-underline-offset:1px">F</u>ile Finder</div>
<svg class="a" style="left:1px;top:580.00px" width="11" height="11" viewBox="0 0 11 11"><rect x="0.5" y="0.5" width="10" height="10" rx="3" fill="#e8444c"/><path d="M3.5 4A2.6 2.6 0 1 0 7.5 4" fill="none" stroke="#fff" stroke-width="1"/><path d="M5.5 2.5V5.5" stroke="#fff" stroke-width="1"/></svg>
<div class="t" style="left:12.6px;top:579.90px;font-size:9.6px;letter-spacing:0.05px;color:#2b2b2b"><u style="text-decoration-thickness:1px;text-underline-offset:1px">S</u>HUTDOWN</div>
<div class="a" style="left:0;top:592.50px;width:148px;height:1px;background:#e2e0dc"></div>
<svg class="a" style="left:1px;top:596.00px" width="11" height="11" viewBox="0 0 11 11"><circle cx="5.5" cy="5.5" r="4" fill="#3a7fd0" stroke="#2a5fa8" stroke-width="2" stroke-dasharray="1.6 1.1"/><circle cx="5.5" cy="5.5" r="1.5" fill="#c7c4c0"/></svg>
<div class="t" style="left:12.6px;top:595.90px;font-size:9.6px;letter-spacing:0.43px;color:#2b2b2b"><u style="text-decoration-thickness:1px;text-underline-offset:1px">M</u>enu/Window Settings</div>
<div class="a" style="left:142px;top:598.00px;width:0;height:0;border-top:3px solid transparent;border-bottom:3px solid transparent;border-left:3.8px solid #1a1a1a"></div>
<div class="a" style="left:0;top:608.25px;width:148px;height:1px;background:#e2e0dc"></div>
<svg class="a" style="left:1.5px;top:611.60px" width="10" height="11" viewBox="0 0 10 11"><rect x="1" y="0.5" width="5" height="10" fill="#6a6a6a" stroke="#444" stroke-width="0.6"/><path d="M6.5 5.5H9.5M8 4L9.5 5.5L8 7" stroke="#555" stroke-width="0.8" fill="none"/></svg>
<div class="t" style="left:12.6px;top:611.50px;font-size:9.6px;letter-spacing:0.25px;color:#2b2b2b"><u style="text-decoration-thickness:1px;text-underline-offset:1px">L</u>ogout...</div>
<div class="a" style="left:142px;top:613.60px;width:0;height:0;border-top:3px solid transparent;border-bottom:3px solid transparent;border-left:3.8px solid #1a1a1a"></div>
<div class="a" style="left:134px;top:609.5px;width:1px;height:14px;background:#b8b5b0"></div>
<div class="a" style="left:135px;top:609.5px;width:1px;height:14px;background:#dedbd7"></div>
<div class="a" style="left:148.3px;top:449px;width:130px;height:86.3px;background:#c7c4c0;border-left:1px solid #dcd9d5"></div>
<div class="a" style="left:148.5px;top:449.3px;width:129.8px;height:14px;background:linear-gradient(#b3b1ad,#a4a29e);border-top:1px solid #bdbab6;border-bottom:1px solid #9a9894"></div>
<svg class="a" style="left:149.5px;top:451.50px" width="11" height="10" viewBox="0 0 11 10"><rect width="11" height="10" fill="#1a1a2a"/><rect x="1" y="1" width="4.5" height="4" fill="#c03030"/><rect x="5.5" y="1" width="4.5" height="4" fill="#4a8a6a"/><rect x="1" y="5" width="4.5" height="4" fill="#d8c8d8"/><rect x="5.5" y="5" width="4.5" height="4" fill="#2020a0"/></svg>
<div class="t" style="left:161.2px;top:451.40px;font-size:9.6px;letter-spacing:0.25px;color:#f4f4f4"><u style="text-decoration-thickness:1px;text-underline-offset:1px">S</u>ball</div>
<svg class="a" style="left:149.5px;top:465.90px" width="11" height="11" viewBox="0 0 11 11"><path d="M5.5 5.5L10 3A5 5 0 1 0 10 8z" fill="#e8e030" stroke="#a8a020" stroke-width="0.5"/></svg>
<div class="t" style="left:161.2px;top:465.80px;font-size:9.6px;letter-spacing:0.25px;color:#2b2b2b"><u style="text-decoration-thickness:1px;text-underline-offset:1px">P</u>acman (SDL)</div>
<svg class="a" style="left:149.5px;top:480.00px" width="11" height="11" viewBox="0 0 11 11"><circle cx="5.5" cy="3" r="2" fill="#555"/><circle cx="3" cy="5.5" r="2" fill="#555"/><circle cx="8" cy="5.5" r="2" fill="#555"/><path d="M4.5 5L3 10H8L6.5 5z" fill="#555"/></svg>
<div class="t" style="left:161.2px;top:479.90px;font-size:9.6px;letter-spacing:0.25px;color:#2b2b2b"><u style="text-decoration-thickness:1px;text-underline-offset:1px">P</u>ySol Fan Club Edition</div>
<svg class="a" style="left:149.5px;top:494.00px" width="11" height="11" viewBox="0 0 11 11"><rect x="0.5" y="0.5" width="10" height="10" fill="#f2f2f2" stroke="#777" stroke-width="0.6"/><path d="M3.8 0.5V10.5M7.2 0.5V10.5M0.5 3.8H10.5M0.5 7.2H10.5" stroke="#888" stroke-width="0.5"/></svg>
<div class="t" style="left:161.2px;top:493.90px;font-size:9.6px;letter-spacing:0.25px;color:#2b2b2b"><u style="text-decoration-thickness:1px;text-underline-offset:1px">S</u>udoku Savant</div>
<svg class="a" style="left:149.5px;top:508.00px" width="11" height="11" viewBox="0 0 11 11"><path d="M2 10.5H9.5C9.5 6 9 2 5 1L4 0.5L3.5 2L1 5L2 6.5L4.5 5.5L2 10.5z" fill="#111"/></svg>
<div class="t" style="left:161.2px;top:507.90px;font-size:9.6px;letter-spacing:0.25px;color:#2b2b2b"><u style="text-decoration-thickness:1px;text-underline-offset:1px">X</u>board</div>
<svg class="a" style="left:149.5px;top:522.00px" width="11" height="11" viewBox="0 0 11 11"><circle cx="5" cy="2.5" r="1.8" fill="#fff" stroke="#666" stroke-width="0.6"/><path d="M5 4.5L3 8H8z" fill="#f0f0f0" stroke="#666" stroke-width="0.6"/><rect x="1.5" y="8.5" width="8" height="2" fill="#ddd" stroke="#666" stroke-width="0.5"/></svg>
<div class="t" style="left:161.2px;top:521.90px;font-size:9.6px;letter-spacing:0.25px;color:#2b2b2b"><u style="text-decoration-thickness:1px;text-underline-offset:1px">e</u>board</div>
<!-- TASKBAR -->
<div class="a" style="left:0;top:624.5px;width:1024px;height:15.5px;background:#bcbcb7;border-top:1px solid #d8d8d4"></div>
<div class="a" style="left:0;top:625px;width:53px;height:15px;background:#cdcac5"></div>
<div class="a" style="left:53px;top:625.5px;width:1px;height:14.5px;background:#a8a5a0"></div>
<div class="a" style="left:54px;top:625.5px;width:44px;height:14.5px;background:#cdcac5"></div>
<div class="a" style="left:98px;top:625.5px;width:271px;height:14.5px;background:#cfccc7;border-top:1px solid #e6e4e0;border-left:1px solid #b3b0ab"></div>
<div class="a" style="left:374.5px;top:625.5px;width:275.5px;height:13.5px;background:linear-gradient(#b3b0ac,#a8a4a0);border-right:1px solid #f2f2f2;border-left:1px solid #c4c1bd"></div>
<!-- start button -->
<div class="a" style="left:12.9px;top:626px;width:23.8px;height:12.7px;border-radius:6.5px;background:linear-gradient(#fcf3c4,#f2d878);border:1.2px solid #b4955c"></div>
<svg class="a" style="left:2px;top:626.3px" width="12.5" height="12.2" viewBox="0 0 12.5 12.2"><path d="M6.25 0.5L12 6.2H8.8V11.7H3.7V6.2H0.5z" fill="#6ee070" stroke="#2f9a30" stroke-width="0.9"/></svg>
<div class="t" style="left:15.6px;top:628.7px;font-size:7.6px;font-weight:bold;font-style:italic;color:#2a2410;letter-spacing:0.2px">Start</div>
<svg class="a" style="left:39.8px;top:626.8px" width="10.5" height="11.5" viewBox="0 0 10.5 11.5"><path d="M1 7C1 3 3 0.8 5.25 0.8S9.5 3 9.5 7" fill="none" stroke="#8a96b0" stroke-width="1.6"/><circle cx="5.5" cy="7.5" r="3" fill="#3f62b8"/><circle cx="5.5" cy="7.5" r="1.2" fill="#c8d8f4"/></svg>
<svg class="a" style="left:55.7px;top:627.9px" width="10.2" height="9.3" viewBox="0 0 10.2 9.3"><rect width="10.2" height="9.3" rx="1" fill="#111"/><path d="M2 2.5L4.5 4.3L2 6" fill="none" stroke="#fff" stroke-width="1"/><path d="M5 7.3H8" stroke="#fff" stroke-width="0.8"/></svg>
<svg class="a" style="left:70.5px;top:627.5px" width="10.5" height="10.5" viewBox="0 0 10.5 10.5"><rect width="10.5" height="10.5" fill="#a8c8e4"/><circle cx="5.25" cy="5.25" r="4.5" fill="#5aa0e0" stroke="#3a80c8" stroke-width="0.6"/><path d="M3 5L5.25 7L7.5 5" fill="none" stroke="#d8ecfb" stroke-width="0.9"/></svg>
<svg class="a" style="left:85px;top:627.3px" width="10.5" height="10.5" viewBox="0 0 10.5 10.5"><path d="M5.25 0.8L10 3.5V8L5.25 10.2L0.5 8V3.5z" fill="#2f7fd8"/><path d="M0.5 3.5L5.25 1.5L10 3.5L5.25 5.5z" fill="#9ad0f8"/></svg>
<svg class="a" style="left:100px;top:627.8px" width="10" height="9.5" viewBox="0 0 10 9.5"><path d="M0.5 0.5h3.5l1 1h4.5v7.5h-9z" fill="#3f7ccc"/><rect x="0.5" y="2.5" width="9" height="6.5" fill="#64a4ee" stroke="#3f78c0" stroke-width="0.5"/></svg>
<div class="t" style="left:110.6px;top:628.4px;font-size:9.3px;color:#333">/root</div>
<svg class="a" style="left:376.3px;top:628px" width="12" height="9" viewBox="0 0 12 9"><path d="M0.5 0.5h4l1 1h6v7h-11z" fill="#d99a3a"/><rect x="0.5" y="2.5" width="11" height="6" fill="#f2b44c" stroke="#d09030" stroke-width="0.5"/></svg>
<div class="t" style="left:389px;top:628.4px;font-size:9.2px;font-weight:bold;color:#222">/backup/00_New_Clips</div>
<!-- tray -->
<svg class="a" style="left:934.5px;top:627px" width="13.5" height="12" viewBox="0 0 13.5 12"><g stroke="#555" stroke-width="1.1"><path d="M2 1V11M6.75 1V11M11.5 1V11"/></g><g fill="#555"><rect x="0.5" y="3" width="3" height="1.6"/><rect x="5.25" y="7" width="3" height="1.6"/><rect x="10" y="4" width="3" height="1.6"/></g></svg>
<div class="a" style="left:953.8px;top:628px;width:12.2px;height:8.5px;background:#f6f6f6;border:1px solid #dcdcdc"></div>
<svg class="a" style="left:970px;top:626.5px" width="13" height="13" viewBox="0 0 13 13"><rect x="6" y="0.5" width="5.5" height="4.5" fill="#4a6592" stroke="#a8b4c8" stroke-width="0.5"/><rect x="0.5" y="5.5" width="6" height="4.5" fill="#4a6592" stroke="#a8b4c8" stroke-width="0.5"/><path d="M3.5 10V12M8.8 5V9H10" stroke="#8a8a8a" stroke-width="0.8" fill="none"/></svg>
<div class="t" style="left:990px;top:628.6px;font-size:9.2px;font-weight:bold;color:#222">2:09</div>
<div class="a" style="left:1012px;top:625.5px;width:12px;height:14.5px;background:#cfcdc9;border-left:1px solid #a8a6a2"></div>
<div class="a" style="left:1014.7px;top:627px;width:0;height:0;border-top:4.7px solid transparent;border-bottom:4.7px solid transparent;border-left:6.5px solid #5a5a5a"></div>
</body></html>
